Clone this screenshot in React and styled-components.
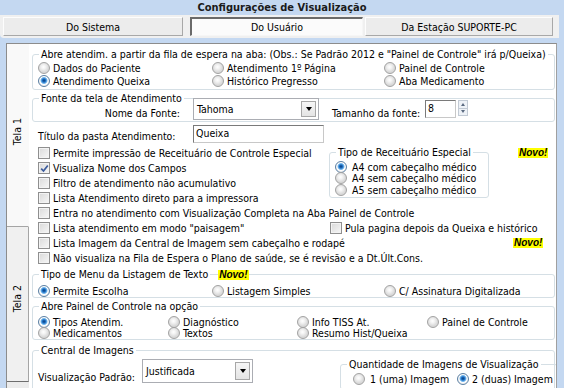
import styled, { createGlobalStyle } from 'styled-components';

const font = '"DejaVu Sans Condensed", "DejaVu Sans", sans-serif';

const GlobalStyle = createGlobalStyle`
  html, body { margin: 0; padding: 0; }
  body {
    background: #c4d8f1;
    font-family: ${font};
    font-size: 10.5px;
    color: #000;
  }
  * { box-sizing: border-box; }
`;

const Window = styled.div`
  width: 564px;
  height: 388px;
  overflow: hidden;
  display: flex;
  flex-direction: column;
  background: #c4d8f1;
`;

const TitleBar = styled.div`
  height: 15px;
  line-height: 15px;
  text-align: center;
  font-weight: bold;
  font-size: 11px;
  color: #1a1a1a;
`;

const TabBar = styled.div`
  display: flex;
  height: 23px;
  margin-right: 5px;
  padding: 2px 0 2px 3px;
  background: #f0f0f0;
  border-bottom-left-radius: 4px;
`;

const Tab = styled.div`
  width: ${p => p.$w}px;
  margin-right: ${p => p.$gap || 0}px;
  display: flex;
  align-items: center;
  justify-content: center;
  background: ${p => (p.$active ? '#fbfbfb' : '#ececec')};
  border: 1px solid;
  border-color: ${p =>
    p.$active ? '#6a6a6a #f6f6f6 #f6f6f6 #6a6a6a' : '#fdfdfd #a8a8a8 #a8a8a8 #fdfdfd'};
  border-width: ${p => (p.$active ? '2px 1px 1px 2px' : '1px')};
`;

const Panel = styled.div`
  flex: 1;
  display: flex;
  margin: 5px 7px 0 6px;
  background: #fff;
  border-top: 1px solid #8c8c8c;
  border-left: 1px solid #8c8c8c;
  border-right: 1px solid #a0a0a0;
  overflow: hidden;
`;

const SideCol = styled.div`
  width: 22px;
  flex: none;
  display: flex;
  flex-direction: column;
  background: #ececec;
`;

const SideTab = styled.div`
  height: ${p => p.$h}px;
  flex: none;
  display: flex;
  flex-direction: column;
  align-items: center;
  padding-top: ${p => p.$pt}px;
  background: ${p => (p.$active ? '#f9f9f9' : '#f0f0f0')};
  border-bottom: 1px solid ${p => (p.$active ? '#a5a5a5' : '#6e6e6e')};
  border-right: 1px solid ${p => (p.$active ? 'transparent' : '#a5a5a5')};
`;

const SideLabel = styled.span`
  writing-mode: vertical-rl;
  transform: rotate(180deg);
  white-space: nowrap;
  line-height: 13px;
`;

const Content = styled.div`
  flex: 1;
  min-width: 0;
  display: flex;
  flex-direction: column;
  padding: 0 1px 0 3px;
`;

const Group = styled.div`
  position: relative;
  flex: ${p => (p.$grow ? 1 : 'none')};
  border: 1px solid #d5dfe5;
  border-radius: 3px;
  padding: ${p => p.$pad};
  margin-top: ${p => p.$mt || 0}px;
  margin-left: ${p => p.$ml || 0}px;
`;

const Legend = styled.div`
  position: absolute;
  top: -7px;
  left: 6px;
  display: flex;
  align-items: center;
  white-space: nowrap;
`;

const LegendText = styled.span`
  background: #fff;
  padding: 0 2px;
  line-height: 13px;
`;

const Novo = styled.span`
  background: #ffff00;
  font-family: "Liberation Sans", Arial, sans-serif;
  font-weight: bold;
  font-style: italic;
  font-size: 10px;
  line-height: 10px;
  padding: 0 1px;
  margin-left: ${p => p.$ml || 0}px;
  white-space: nowrap;
`;

const RadioGrid = styled.div`
  display: grid;
  grid-template-columns: ${p => p.$cols};
  grid-auto-rows: ${p => p.$row}px;
`;

const Option = styled.div`
  display: flex;
  align-items: center;
  gap: ${p => p.$gap || 3}px;
  white-space: nowrap;
`;

const Dot = styled.span`
  width: 12px;
  height: 12px;
  flex: none;
  border-radius: 50%;
  border: 1px solid ${p => (p.$on ? '#5a7fa3' : '#a2a2a2')};
  background: ${p =>
    p.$on
      ? 'radial-gradient(circle at 50% 45%, #0b3c78 0, #1b6cc0 1.6px, #74b8ee 3px, #ffffff 3.9px, #f0f0f0 5px)'
      : 'radial-gradient(circle at 45% 40%, #ffffff 0, #f3f3f3 2px, #d9d9d9 5px)'};
`;

const Box = styled.span`
  width: 12px;
  height: 12px;
  flex: none;
  display: flex;
  align-items: center;
  justify-content: center;
  border: 1px solid #8f8f8f;
  background: linear-gradient(135deg, #d9d9d9, #f7f7f7);
  box-shadow: inset 0 0 0 1px #f3f3f3;
`;

const CheckGrid = styled.div`
  display: grid;
  grid-template-columns: 291px 160px 1fr;
  grid-template-rows: repeat(8, 15px);
  margin-top: 2.5px;
  padding-left: 6px;
`;

const Cell = styled.div`
  grid-column: ${p => p.$c};
  grid-row: ${p => p.$r};
  display: flex;
  align-items: ${p => p.$align || 'center'};
  padding-left: ${p => p.$pl || 0}px;
  min-width: 0;
`;

const Row = styled.div`
  display: flex;
  align-items: ${p => p.$align || 'flex-end'};
  height: ${p => p.$h}px;
  margin-top: ${p => p.$mt || 0}px;
  padding-left: ${p => p.$pl || 0}px;
`;

const FieldLabel = styled.span`
  width: ${p => (p.$w ? `${p.$w}px` : 'auto')};
  flex: none;
  text-align: ${p => p.$align || 'left'};
  line-height: ${p => p.$lh || 14}px;
  margin-right: ${p => p.$mr || 0}px;
  margin-left: ${p => p.$ml || 0}px;
  margin-top: ${p => p.$mt || 0}px;
  white-space: nowrap;
`;

const Select = styled.div`
  width: ${p => p.$w}px;
  height: ${p => p.$h}px;
  flex: none;
  display: flex;
  align-items: center;
  border: 1px solid #abadb3;
  background: #fff;
  padding: 2px 2px 2px 3px;
`;

const SelectText = styled.span`
  flex: 1;
  line-height: 13px;
`;

const DropBtn = styled.span`
  width: 15px;
  align-self: stretch;
  display: flex;
  align-items: center;
  justify-content: center;
  border: 1px solid #a7a7a7;
  background: linear-gradient(#f6f6f6, #e4e4e4);
  &::after {
    content: '';
    border-left: 3.5px solid transparent;
    border-right: 3.5px solid transparent;
    border-top: 4px solid #000;
  }
`;

const TextInput = styled.div`
  width: ${p => p.$w}px;
  height: ${p => p.$h}px;
  flex: none;
  align-self: ${p => p.$self || 'auto'};
  margin-top: ${p => p.$mt || 0}px;
  border: 1px solid #abadb3;
  border-color: #7a7a7a #c8c8c8 #c8c8c8 #7a7a7a;
  background: #fff;
  padding: 1px 2px;
  line-height: 13px;
`;

const Spinner = styled.div`
  width: 10px;
  height: 16px;
  margin: 2px 0 0 2px;
  align-self: flex-start;
  display: flex;
  flex-direction: column;
  border: 1px solid #c2cad4;
  background: #eef2f7;
`;

const SpinHalf = styled.span`
  flex: 1;
  display: flex;
  align-items: center;
  justify-content: center;
  &::after {
    content: '';
    border-left: 2.5px solid transparent;
    border-right: 2.5px solid transparent;
    ${p => (p.$up ? 'border-bottom' : 'border-top')}: 3px solid #5a6a80;
  }
  & + & {
    border-top: 1px solid #c2cad4;
  }
`;

const Radio = ({ on, children, gap }) => (
  <Option $gap={gap}>
    <Dot $on={on} />
    <span>{children}</span>
  </Option>
);

const Check = ({ on, children }) => (
  <Option $gap={3}>
    <Box>
      {on && (
        <svg width="9" height="9" viewBox="0 0 9 9">
          <path d="M1.2 4.6 L3.5 7 L7.8 1.4" stroke="#3b5b9c" strokeWidth="1.7" fill="none" />
        </svg>
      )}
    </Box>
    <span>{children}</span>
  </Option>
);

const App = () => (
  <>
    <GlobalStyle />
    <Window>
      <TitleBar>Configurações de Visualização</TitleBar>
      <TabBar>
        <Tab $w={180} $gap={7}>Do Sistema</Tab>
        <Tab $w={173} $gap={2} $active>Do Usuário</Tab>
        <Tab $w={188}>Da Estação SUPORTE-PC</Tab>
      </TabBar>

      <Panel>
        <SideCol>
          <SideTab $h={183} $pt={74} $active>
            <SideLabel>Tela 1</SideLabel>
          </SideTab>
          <SideTab $h={155} $pt={58}>
            <SideLabel>Tela 2</SideLabel>
          </SideTab>
        </SideCol>

        <Content>
          <Group $mt={10} $pad="6px 4px 2px 5px">
            <Legend>
              <LegendText>
                Abre atendim. a partir da fila de espera na aba: (Obs.: Se Padrão 2012 e "Painel de Controle" irá p/Queixa)
              </LegendText>
            </Legend>
            <RadioGrid $cols="174px 172px 1fr" $row={13}>
              <Radio>Dados do Paciente</Radio>
              <Radio>Atendimento 1º Página</Radio>
              <Radio>Painel de Controle</Radio>
              <Radio on>Atendimento Queixa</Radio>
              <Radio>Histórico Pregresso</Radio>
              <Radio>Aba Medicamento</Radio>
            </RadioGrid>
          </Group>

          <Group $mt={8} $pad="0 4px 1px 5px">
            <Legend>
              <LegendText>Fonte da tela de Atendimento</LegendText>
            </Legend>
            <Row $h={22} $mt={-1}>
              <FieldLabel $w={142} $align="right" $mr={13}>Nome da Fonte:</FieldLabel>
              <Select $w={126} $h={22}>
                <SelectText>Tahoma</SelectText>
                <DropBtn />
              </Select>
              <FieldLabel $w={93} $ml={13}>Tamanho da fonte:</FieldLabel>
              <TextInput $w={31} $h={18} $self="flex-start" $mt={2}>8</TextInput>
              <Spinner>
                <SpinHalf $up />
                <SpinHalf />
              </Spinner>
            </Row>
          </Group>

          <Row $h={18} $mt={3} $pl={6}>
            <FieldLabel $w={155} $lh={13}>Título da pasta Atendimento:</FieldLabel>
            <TextInput $w={131} $h={18}>Queixa</TextInput>
          </Row>

          <CheckGrid>
            <Cell $c="1" $r="1"><Check>Permite impressão de Receituário de Controle Especial</Check></Cell>
            <Cell $c="1" $r="2"><Check on>Visualiza Nome dos Campos</Check></Cell>
            <Cell $c="1" $r="3"><Check>Filtro de atendimento não acumulativo</Check></Cell>
            <Cell $c="1" $r="4"><Check>Lista Atendimento direto para a impressora</Check></Cell>
            <Cell $c="1 / -1" $r="5"><Check>Entra no atendimento com Visualização Completa na Aba Painel de Controle</Check></Cell>
            <Cell $c="1" $r="6"><Check>Lista atendimento em modo "paisagem"</Check></Cell>
            <Cell $c="2 / -1" $r="6" $pl={1}><Check>Pula pagina depois da Queixa e histórico</Check></Cell>
            <Cell $c="1 / 3" $r="7"><Check>Lista Imagem da Central de Imagem sem cabeçalho e rodapé</Check></Cell>
            <Cell $c="3" $r="7" $pl={24}><Novo>Novo!</Novo></Cell>
            <Cell $c="1 / -1" $r="8"><Check>Não visualiza na Fila de Espera o Plano de saúde, se é revisão e a Dt.Últ.Cons.</Check></Cell>

            <Cell $c="2" $r="1 / span 4" $align="flex-start">
              <Group $mt={6.5} $pad="8px 4px 1px 5px" $grow>
                <Legend>
                  <LegendText>Tipo de Receituário Especial</LegendText>
                </Legend>
                <RadioGrid $cols="1fr" $row={11.5}>
                  <Radio on gap={5}>A4 com cabeçalho médico</Radio>
                  <Radio gap={5}>A4 sem cabeçalho médico</Radio>
                  <Radio gap={5}>A5 sem cabeçalho médico</Radio>
                </RadioGrid>
              </Group>
            </Cell>
            <Cell $c="3" $r="1" $pl={29}><Novo>Novo!</Novo></Cell>
          </CheckGrid>

          <Group $mt={8.5} $pad="9px 4px 0 5px">
            <Legend>
              <LegendText>Tipo de Menu da Listagem de Texto</LegendText>
              <Novo $ml={8}>Novo!</Novo>
            </Legend>
            <RadioGrid $cols="174px 172px 1fr" $row={13}>
              <Radio on>Permite Escolha</Radio>
              <Radio>Listagem Simples</Radio>
              <Radio>C/ Assinatura Digitalizada</Radio>
            </RadioGrid>
          </Group>

          <Group $mt={8} $pad="9px 4px 0 5px">
            <Legend>
              <LegendText>Abre Painel de Controle na opção</LegendText>
            </Legend>
            <RadioGrid $cols="130px 129px 130px 1fr" $row={11.5}>
              <Radio on>Tipos Atendim.</Radio>
              <Radio>Diagnóstico</Radio>
              <Radio>Info TISS At.</Radio>
              <Radio>Painel de Controle</Radio>
              <Radio>Medicamentos</Radio>
              <Radio>Textos</Radio>
              <Radio>Resumo Hist/Queixa</Radio>
            </RadioGrid>
          </Group>

          <Group $mt={10} $pad="8px 2px 0 5px">
            <Legend>
              <LegendText>Central de Imagens</LegendText>
            </Legend>
            <Row $h={40} $align="flex-start">
              <FieldLabel $w={104} $lh={13} $mt={11.5}>Visualização Padrão:</FieldLabel>
              <Select $w={111} $h={24}>
                <SelectText>Justificada</SelectText>
                <DropBtn />
              </Select>
              <Group $mt={5} $ml={87} $pad="8px 4px 4px 12px" $grow>
                <Legend>
                  <LegendText>Quantidade de Imagens de Visualização</LegendText>
                </Legend>
                <RadioGrid $cols="104px 1fr" $row={11.5}>
                  <Radio gap={5}>1 (uma) Imagem</Radio>
                  <Radio on>2 (duas) Imagem</Radio>
                </RadioGrid>
              </Group>
            </Row>
          </Group>
        </Content>
      </Panel>
    </Window>
  </>
);

export default App;
